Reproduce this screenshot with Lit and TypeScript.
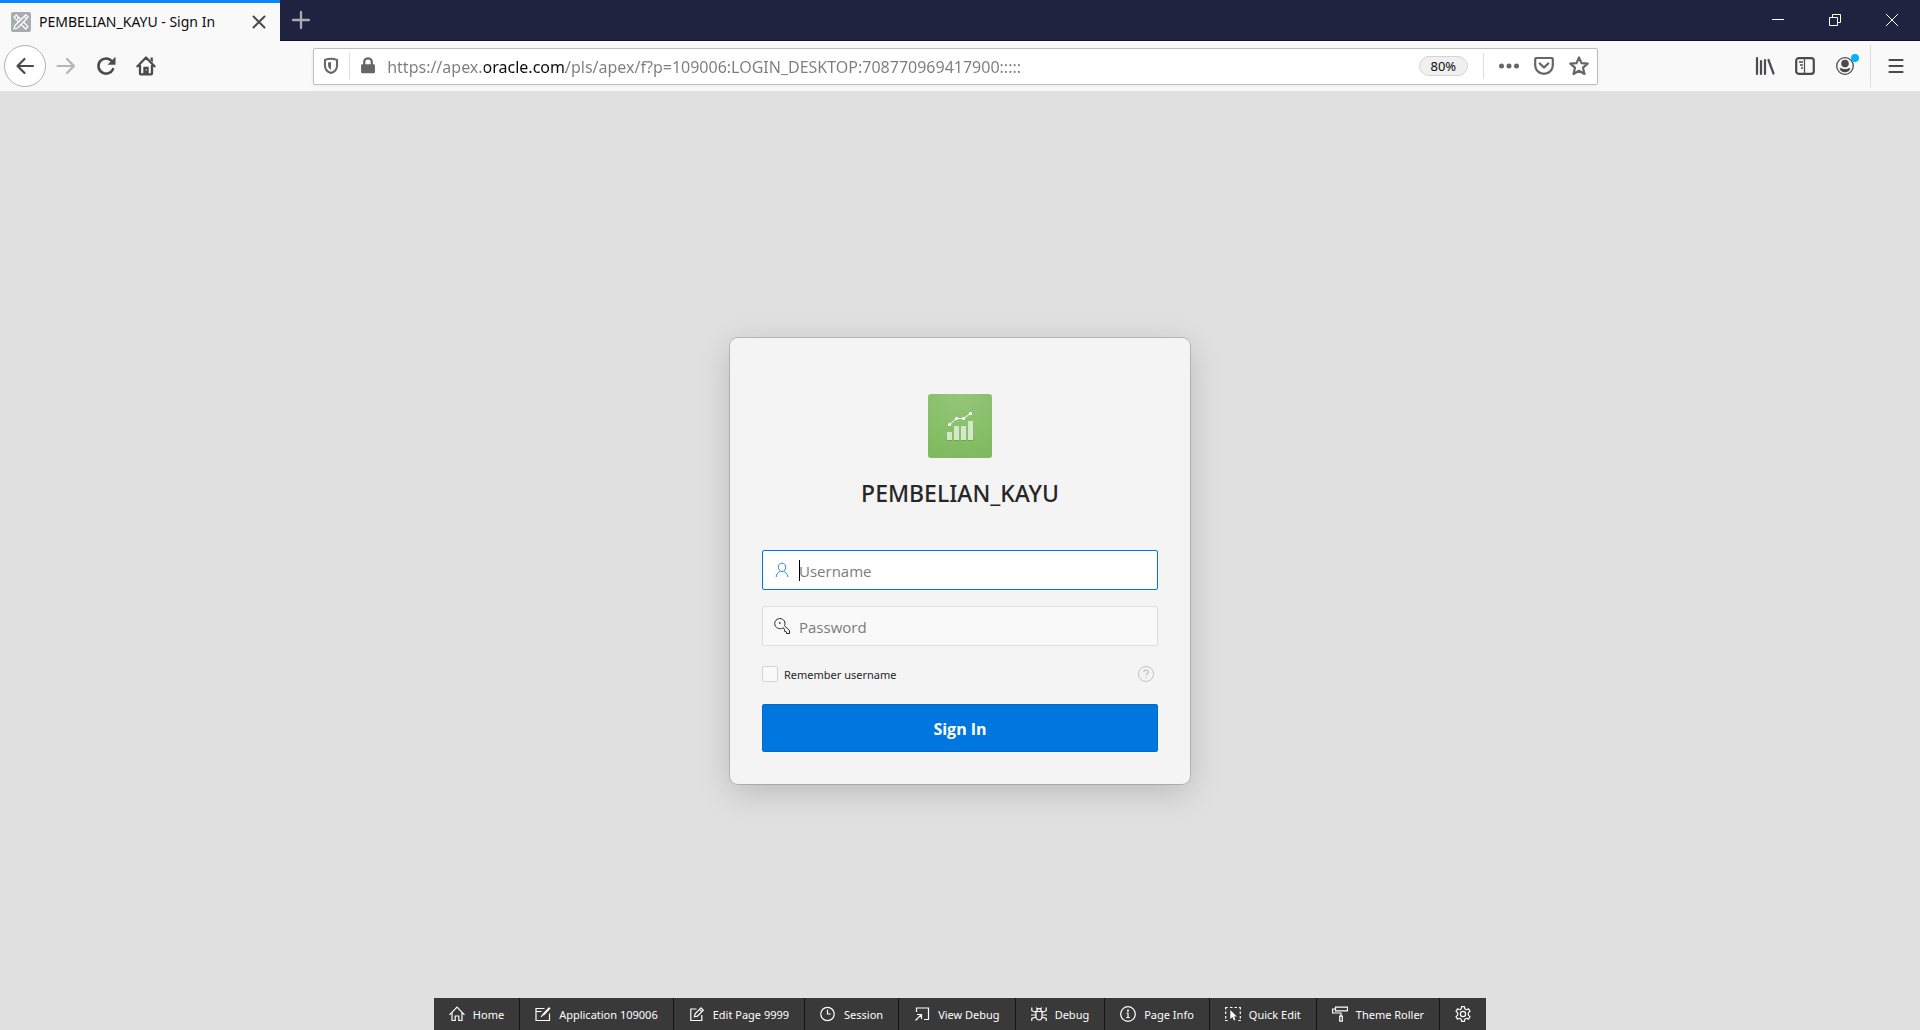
import { LitElement, html, css, svg, SVGTemplateResult, TemplateResult } from "lit";
import { customElement, property, state } from "lit/decorators.js";

const glyphs: Record<string, SVGTemplateResult> = {
  home: svg`<path d="M.5 8.800 8 1.200l7.500 7.600M3 6.800v7.700h3.200V10h3.600v4.500H13V6.800"/>`,
  application: svg`<path d="M9.500 2.500H1v12h13.500V7.500M1 5.500h5.500"/><path d="M14.800 1.800 8 9" stroke-width="2"/><path d="M7.600 8.600 6.200 11"/>`,
  edit: svg`<path d="M7.500 3H1.800v11.500h11V9"/><path d="m5.400 10.800.7-3L12 1.900l2.300 2.300-5.900 5.900zM10.600 3.400l2.200 2.200"/>`,
  session: svg`<circle cx="7.500" cy="8" r="6.700"/><path d="M7.500 3.800V8h3.300"/>`,
  viewDebug: svg`<path d="M2.500 6V2h12v11.500H10M1.500 14.500 7 9M3 8.500h4.500V13"/>`,
  debug: svg`<path d="M5 5.500h6v4.700a3 3.700 0 0 1-6 0zM5.700 5.300a2.300 2.600 0 0 1 4.600 0M.8 1.500v3.200L5 6.500M15.200 1.500v3.200L11 6.500M0 9h5M16 9h-5M.8 15v-2.500L5.200 11M15.200 15v-2.500L10.800 11M5.300 1.500l1.200 1.700M10.700 1.500 9.500 3.200"/>`,
  info: svg`<circle cx="8" cy="8" r="7.300"/><path d="M6.500 7H8v4.500M6.300 11.500h3.400"/><circle cx="8" cy="4.600" r=".5" fill="currentColor"/>`,
  quick: svg`<path d="M.7 3.500V1.500h2M5 1.500h2.500M9.500 1.500H12M14 1.500h1.300v2M.7 5.500v2.500M.7 10v2.500M.7 14v.5h2M15.300 5.500V8M15.300 10v2.500M15.300 14v.5h-2"/><path d="M5.300 4v9l2.200-2 1.400 3.500 1.500-.7L9 10.500h2.800z" fill="currentColor" stroke="none"/>`,
  theme: svg`<path d="M3.500 1.200h12v3.600h-12zM3.500 3H.6v4H9v3"/><path d="M7.700 10.200h2.600v5H7.700z"/>`,
  gear: svg`<circle cx="8" cy="8" r="2.600"/><path d="m6.600.6-.4 2.200-1.500.9-2.200-.8L1 5.400l1.700 1.500v2.200L1 10.600l1.500 2.500 2.200-.8 1.500.9.4 2.200h2.800l.4-2.200 1.500-.9 2.200.8 1.500-2.500-1.700-1.500V6.900L15 5.400l-1.500-2.500-2.200.8-1.500-.9L9.400.6z" stroke-linejoin="round"/>`,
  user: svg`<path d="M8 1.200c2.300 0 3.700 1.700 3.700 3.900C11.700 7.500 10 9.500 8 9.500S4.300 7.500 4.300 5.100C4.300 2.900 5.700 1.200 8 1.200zM2.200 15c0-2.800 1.600-4.300 3.800-5.500M13.800 15c0-2.800-1.600-4.300-3.800-5.500"/>`,
  key: svg`<path d="M9.500 9.800C7 11.300 3.500 11 1.600 8.500-.6 5 1.500.8 5.700.5c4 0 6.400 4 4.800 7.200l5 5v2.800h-3l-.3-1.800-1.500-.3-.2-1.700z"/><path d="M5 4.200h1.500v1.500H5z" fill="currentColor" stroke="none"/>`,
  help: svg`<circle cx="8" cy="8" r="7.500"/><path d="M5.700 6.300C5.700 4.900 6.700 4.200 8 4.200s2.300.8 2.300 2c0 1.500-2.200 1.500-2.200 3.300" stroke-width="1.300"/><path d="M7.500 11h1.300v1.300H7.500z" fill="currentColor" stroke="none"/>`,
  back: svg`<path d="M18 10H2.500M9.500 3l-7 7 7 7" stroke-width="2.200" stroke-linecap="round" stroke-linejoin="round"/>`,
  forward: svg`<path d="M1.500 10h16M11 3l7 7-7 7" stroke-width="2.200" stroke-linecap="round" stroke-linejoin="round"/>`,
  reload: svg`<path d="M17 13.200A7.600 7.600 0 1 1 16 5.300" stroke-width="2.600" stroke-linecap="round"/><path d="M19.500.8v8h-8z" fill="currentColor" stroke="none"/>`,
  homeNav: svg`<path d="M1.500 10.300 10 1.500l8.500 8.800M4 9v8.500q0 .8.800.8h10.400q.8 0 .8-.8V9" stroke-width="2.300" stroke-linecap="round" stroke-linejoin="round"/><path d="M14.500 1.500h2.300v5l-2.300-2.300z" fill="currentColor" stroke="none"/><path d="M7.300 18v-6.500q0-.8.800-.8h3.800q.8 0 .8.800V18z" fill="currentColor" stroke="none"/><path d="M10.300 13.300v1.200" stroke="#fff" stroke-width="1"/>`,
  shield: svg`<path d="M10 2c2.500 0 4.600.4 6.700 1.200v6.300c0 4-3 7.200-6.700 8.300-3.700-1.100-6.700-4.300-6.700-8.300V3.200C5.400 2.400 7.500 2 10 2z" stroke-width="2.300" stroke-linejoin="round"/><path d="M10 5.500v8.800c-2-1-3.300-3-3.300-5.300V6z" fill="currentColor" stroke="none"/>`,
  lock: svg`<path d="M5.800 9V5.500a4.200 4 0 0 1 8.400 0V9" stroke-width="2.500"/><path d="M3.700 8h12.600q1.400 0 1.400 1.400v7.200q0 1.400-1.400 1.400H3.700q-1.400 0-1.400-1.400V9.400Q2.300 8 3.700 8z" fill="currentColor" stroke="none"/>`,
  dots: svg`<g fill="currentColor" stroke="none"><circle cx="2.500" cy="10" r="2.500"/><circle cx="10" cy="10" r="2.500"/><circle cx="17.500" cy="10" r="2.500"/></g>`,
  pocket: svg`<path d="M2.200 2h15.600q1 0 1 1v6.500a8.800 8.300 0 0 1-17.600 0V3q0-1 1-1z" stroke-width="2.200"/><path d="m5.800 7.500 4.200 4 4.200-4" stroke-width="2.400" stroke-linecap="round" stroke-linejoin="round"/>`,
  star: svg`<path d="m10 1.500 2.500 5.600 6.200.6-4.700 4 1.500 6.300L10 14.800 4.500 18 6 11.700l-4.700-4 6.200-.6z" stroke-width="2.200" stroke-linejoin="round"/>`,
  library: svg`<path d="M2 2v16M6 5v13M10 4v14M13.500 4l5 13.500" stroke-width="2.200" stroke-linecap="round"/>`,
  sidebar: svg`<rect x="1.200" y="2.200" width="17.600" height="15.600" rx="2.500" stroke-width="2.200"/><path d="M9.500 2v16" stroke-width="1.200"/><path d="M4 6h4M5 9h3M6 12h2" stroke-width="1.300"/>`,
  account: svg`<circle cx="10" cy="10" r="8.300" stroke-width="1.300"/><circle cx="10" cy="7.600" r="3.800" fill="currentColor" stroke="none"/><path d="M4.500 12q2.500 0 3.500 1h4q1-1 3.500-1c-.6 2.800-2.800 4.200-5.500 4.200S5.100 14.800 4.500 12z" fill="currentColor" stroke="none"/>`,
  menu: svg`<path d="M3.500 4h13M3.500 10h13M3.500 16h13" stroke-width="2.200" stroke-linecap="round"/>`,
  close: svg`<path d="m4.500 4.500 11 11M15.500 4.500l-11 11" stroke-width="2" stroke-linecap="round"/>`,
  plus: svg`<path d="M10 2v16M2 10h16" stroke-width="2.300" stroke-linecap="round"/>`,
  minimize: svg`<path d="M4 9.500h12"/>`,
  restore: svg`<path d="M4.500 7.500h8v8h-8zM7.500 7.500v-3h8v8h-3"/>`,
  closeWindow: svg`<path d="m4 4 12 12M16 4 4 16"/>`,
};

const icon16 = (name: string): TemplateResult =>
  html`<svg class="icon16" viewBox="0 0 16 16" aria-hidden="true">${glyphs[name]}</svg>`;
const icon20 = (name: string): TemplateResult =>
  html`<svg class="icon20" viewBox="0 0 20 20" aria-hidden="true">${glyphs[name]}</svg>`;

const shared = css`
  * {
    box-sizing: border-box;
  }
  button,
  input {
    font: inherit;
    color: inherit;
    margin: 0;
    padding: 0;
    border: 0;
    background: none;
    border-radius: 0;
  }
  button {
    display: flex;
    align-items: center;
    justify-content: center;
  }
  svg {
    display: block;
    flex: none;
    fill: none;
    stroke: currentColor;
  }
  .icon16 {
    width: 16px;
    height: 16px;
    stroke-width: 1;
  }
  .icon20 {
    width: 20px;
    height: 20px;
    stroke-width: 1;
  }
`;

@customElement("browser-chrome")
export class BrowserChrome extends LitElement {
  @property() pageTitle = "";
  @property() address = "";

  static styles = [
    shared,
    css`
      :host {
        display: block;
        color: #4b4b4d;
        font-family: "Noto Sans", "Open Sans", sans-serif;
      }
      .tabs {
        display: flex;
        height: 41px;
        background: #20233f;
        border-bottom: 1px solid #12132b;
      }
      .tab {
        display: flex;
        align-items: center;
        width: 280px;
        height: 41px;
        padding: 0 10px 0 11px;
        border-top: 3px solid #0a84ff;
        background: #f9f9fa;
      }
      .tab-title {
        flex: 1;
        padding-left: 8px;
        font-size: 14px;
        line-height: 20px;
        color: #0c0c0d;
        white-space: nowrap;
      }
      .tab-close {
        width: 22px;
        height: 22px;
      }
      .new-tab {
        width: 42px;
        color: #a9aab6;
      }
      .window {
        display: flex;
        margin-left: auto;
        color: #fff;
      }
      .window button {
        width: 57px;
      }
      .bar {
        display: flex;
        align-items: center;
        height: 50px;
        padding: 0 4px;
        background: #f9f9fa;
      }
      .tool {
        width: 40px;
        height: 40px;
      }
      .round {
        width: 42px;
        height: 42px;
        border: 1px solid #b1b1b3;
        border-radius: 50%;
        background: #fff;
      }
      .disabled {
        color: #b5b5b7;
      }
      .space {
        flex: 3;
      }
      .address {
        flex: 26;
        display: flex;
        align-items: center;
        height: 37px;
        min-width: 0;
        padding-left: 7px;
        border: 1px solid #bcbcbd;
        border-radius: 2px;
        background: #fff;
        box-shadow: 0 1px 4px rgba(0, 0, 0, 0.06);
        color: #666668;
      }
      .address .action {
        width: 35px;
        height: 28px;
      }
      .address .identity {
        width: 20px;
        height: 28px;
      }
      .identity svg {
        width: 18px;
        height: 18px;
      }
      .rule {
        width: 1px;
        height: 26px;
        margin: 0 8px;
        background: #dcdcdd;
      }
      .url {
        flex: 1;
        min-width: 0;
        height: 31px;
        margin-left: 9px;
        padding-top: 1px;
        font-size: 16px;
        background: linear-gradient(90deg, #7d7d7f 97px, #0c0c0d 97px 179px, #7d7d7f 179px);
        background-clip: text;
        -webkit-background-clip: text;
        -webkit-text-fill-color: transparent;
        outline: none;
      }
      .zoom {
        width: 49px;
        height: 20px;
        margin-right: 7px;
        border: 1px solid #d4d4d6;
        border-radius: 10px;
        background: #f0f0f1;
        font-size: 13px;
        line-height: 18px;
        color: #0c0c0d;
      }
      .dot {
        position: relative;
      }
      .dot::after {
        content: "";
        position: absolute;
        top: 8px;
        right: 6px;
        width: 8px;
        height: 8px;
        border-radius: 50%;
        background: #00b3f4;
      }
      .divider {
        width: 1px;
        height: 42px;
        margin: 0 5px;
        background: #dcdcdd;
      }
      .favicon {
        width: 20px;
        height: 20px;
      }
    `,
  ];

  render() {
    return html`
      <div class="tabs">
        <div class="tab">
          <svg class="favicon" viewBox="0 0 20 20" aria-hidden="true">
            <rect width="20" height="20" rx="2" fill="#a9acb1" stroke="none" />
            <g stroke="#fff" stroke-width="1.200" stroke-linejoin="round">
              <path d="M5.300 3 3 5.300 14.700 17 17 14.700zM13.700 9.200l-1.500 1.500M7.800 5.500 6.300 7" />
              <path d="M14.800 2.800 17.200 5.200 6.500 16 3 17l1-3.500z" fill="#a9acb1" />
              <path d="m13.300 4.500 2.300 2.300" />
            </g>
          </svg>
          <span class="tab-title">${this.pageTitle}</span>
          <button class="tab-close" aria-label="Close tab">${icon20("close")}</button>
        </div>
        <button class="new-tab" aria-label="New tab">${icon20("plus")}</button>
        <div class="window">
          <button aria-label="Minimize">${icon20("minimize")}</button>
          <button aria-label="Restore">${icon20("restore")}</button>
          <button aria-label="Close window">${icon20("closeWindow")}</button>
        </div>
      </div>
      <div class="bar">
        <button class="round" aria-label="Back">${icon20("back")}</button>
        <button class="tool disabled" aria-label="Forward">${icon20("forward")}</button>
        <button class="tool" aria-label="Reload">${icon20("reload")}</button>
        <button class="tool" aria-label="Home">${icon20("homeNav")}</button>
        <span class="space"></span>
        <div class="address">
          <button class="identity" aria-label="Tracking protection">${icon20("shield")}</button>
          <span class="rule"></span>
          <button class="identity" aria-label="Site security">${icon20("lock")}</button>
          <input class="url" aria-label="Address" spellcheck="false" .value=${this.address} />
          <button class="zoom">80%</button>
          <span class="rule"></span>
          <button class="action" aria-label="Page actions">${icon20("dots")}</button>
          <button class="action" aria-label="Save to Pocket">${icon20("pocket")}</button>
          <button class="action" aria-label="Bookmark">${icon20("star")}</button>
        </div>
        <span class="space"></span>
        <button class="tool" aria-label="Library">${icon20("library")}</button>
        <button class="tool" aria-label="Sidebars">${icon20("sidebar")}</button>
        <button class="tool dot" aria-label="Account">${icon20("account")}</button>
        <span class="divider"></span>
        <button class="tool" aria-label="Menu">${icon20("menu")}</button>
      </div>
    `;
  }
}

@customElement("login-card")
export class LoginCard extends LitElement {
  @property() name = "";
  @state() private username = "";

  static styles = [
    shared,
    css`
      :host {
        display: block;
        width: 100%;
        max-width: 460px;
      }
      .card {
        display: flex;
        flex-direction: column;
        padding: 56px 32px 32px;
        border-radius: 8px;
        background: #f4f4f4;
        box-shadow: 0 0 0 1px rgba(0, 0, 0, 0.15), 0 8px 32px rgba(0, 0, 0, 0.17);
        color: #262626;
      }
      .logo {
        align-self: center;
        width: 64px;
        height: 64px;
      }
      .title {
        margin: 15px 0 37px;
        font-family: "Noto Sans", "Open Sans", sans-serif;
        font-size: 23px;
        line-height: 40px;
        font-weight: 500;
        text-align: center;
      }
      .field {
        position: relative;
        display: flex;
        align-items: center;
        height: 40px;
        margin-bottom: 16px;
        padding-left: 11px;
        border: 1px solid #dfdfdf;
        border-radius: 2px;
        background: #f9f9f9;
      }
      .active {
        border-color: #0076df;
        background: #fff;
      }
      .active .icon16 {
        color: #2d7fdc;
      }
      .field input {
        flex: 1;
        min-width: 0;
        height: 38px;
        padding: 2px 0 0 9px;
        font-size: 15px;
        outline: none;
      }
      .field input::placeholder {
        color: #7b7b7b;
        opacity: 1;
      }
      .caret {
        position: absolute;
        left: 36px;
        top: 9px;
        width: 1px;
        height: 21px;
        background: #000;
      }
      .options {
        display: flex;
        align-items: center;
        height: 24px;
        margin-bottom: 18px;
        padding-right: 4px;
      }
      .check {
        appearance: none;
        width: 16px;
        height: 16px;
        border: 1px solid #d4d4d4;
        border-radius: 2px;
        background: #f9f9f9;
      }
      .check:checked {
        background: #0076df;
      }
      .remember {
        flex: 1;
        padding: 2px 0 0 6px;
        font-family: "Noto Sans", "Open Sans", sans-serif;
        font-size: 11px;
        line-height: 16px;
      }
      .help {
        color: #c2c2c2;
      }
      .submit {
        height: 48px;
        padding-top: 2px;
        border: 1px solid #006bca;
        border-radius: 2px;
        background: #0076df;
        color: #fff;
        font-size: 16px;
        font-weight: 700;
      }
      form {
        display: flex;
        flex-direction: column;
      }
    `,
  ];

  render() {
    return html`
      <div class="card">
        <svg class="logo" viewBox="0 0 64 64" aria-hidden="true">
          <defs>
            <radialGradient id="leaf" cx=".5" cy="0" r="1">
              <stop offset="0" stop-color="#95c679" />
              <stop offset="1" stop-color="#80ba5f" />
            </radialGradient>
          </defs>
          <rect width="64" height="64" rx="3" fill="url(#leaf)" stroke="none" />
          <path d="M19 46h5v1h-5zM26 46h5v1h-5zM33 46h5v1h-5zM40 46h5v1h-5z" fill="#6ea34f" stroke="none" />
          <path d="M19 38h5v8h-5zM26 32h5v14h-5zM33 32h5v14h-5zM40 27h5v19h-5z" fill="#d3e8c9" stroke="none" />
          <path d="m21.500 30.500 7-6h7l7-5" stroke="#fff" />
          <g fill="#fff" stroke="none">
            <circle cx="21.500" cy="30.500" r="1.600" />
            <circle cx="28.500" cy="24.500" r="1.600" />
            <circle cx="35.500" cy="24.500" r="1.600" />
            <circle cx="42.500" cy="19.500" r="1.600" />
          </g>
        </svg>
        <h1 class="title">${this.name}</h1>
        <form @submit=${(e: Event) => e.preventDefault()}>
          <div class="field active">
            ${icon16("user")}
            <input
              type="text"
              placeholder="Username"
              aria-label="Username"
              .value=${this.username}
              @input=${(e: InputEvent) => (this.username = (e.target as HTMLInputElement).value)}
            />
            ${this.username ? "" : html`<span class="caret"></span>`}
          </div>
          <div class="field">
            ${icon16("key")}
            <input type="password" placeholder="Password" aria-label="Password" />
          </div>
          <div class="options">
            <input class="check" type="checkbox" id="remember" />
            <label class="remember" for="remember">Remember username</label>
            <button class="help" type="button" aria-label="Help">${icon16("help")}</button>
          </div>
          <button class="submit" type="submit">Sign In</button>
        </form>
      </div>
    `;
  }
}

@customElement("developer-toolbar")
export class DeveloperToolbar extends LitElement {
  private items = [
    { icon: "home", label: "Home" },
    { icon: "application", label: "Application 109006" },
    { icon: "edit", label: "Edit Page 9999" },
    { icon: "session", label: "Session" },
    { icon: "viewDebug", label: "View Debug" },
    { icon: "debug", label: "Debug" },
    { icon: "info", label: "Page Info" },
    { icon: "quick", label: "Quick Edit" },
    { icon: "theme", label: "Theme Roller" },
  ];

  static styles = [
    shared,
    css`
      :host {
        display: block;
        font-family: "Noto Sans", "Open Sans", sans-serif;
      }
      .strip {
        display: flex;
        background: #393939;
        color: #fff;
        font-size: 11px;
        line-height: 16px;
      }
      .item {
        gap: 8px;
        height: 32px;
        padding: 0 15px;
        border-right: 1px solid #141414;
        white-space: nowrap;
      }
      .item span {
        padding-top: 2px;
      }
      .item .icon16 {
        stroke-width: 1.2;
      }
      .item:last-child {
        border-right: 0;
      }
    `,
  ];

  render() {
    return html`
      <nav class="strip" aria-label="Developer toolbar">
        ${this.items.map((i) => html`<button class="item">${icon16(i.icon)}<span>${i.label}</span></button>`)}
        <button class="item" aria-label="Settings">${icon16("gear")}</button>
      </nav>
    `;
  }
}

@customElement("app-root")
export class AppRoot extends LitElement {
  static styles = css`
    :host {
      display: flex;
      flex-direction: column;
      min-height: 100vh;
      background: #e0e0e0;
      font-family: "Open Sans", "Noto Sans", sans-serif;
    }
    .page {
      flex: 1;
      display: grid;
      grid-template-rows: 32px 1fr 32px;
      justify-items: center;
    }
    .center {
      grid-row: 2;
      display: flex;
      align-items: center;
      justify-content: center;
      width: 100%;
    }
    .dev {
      grid-row: 3;
    }
  `;

  render() {
    return html`
      <browser-chrome
        pageTitle="PEMBELIAN_KAYU - Sign In"
        address="https://apex.oracle.com/pls/apex/f?p=109006:LOGIN_DESKTOP:708770969417900:::::"
      ></browser-chrome>
      <main class="page">
        <div class="center"><login-card name="PEMBELIAN_KAYU"></login-card></div>
        <developer-toolbar class="dev"></developer-toolbar>
      </main>
    `;
  }
}
